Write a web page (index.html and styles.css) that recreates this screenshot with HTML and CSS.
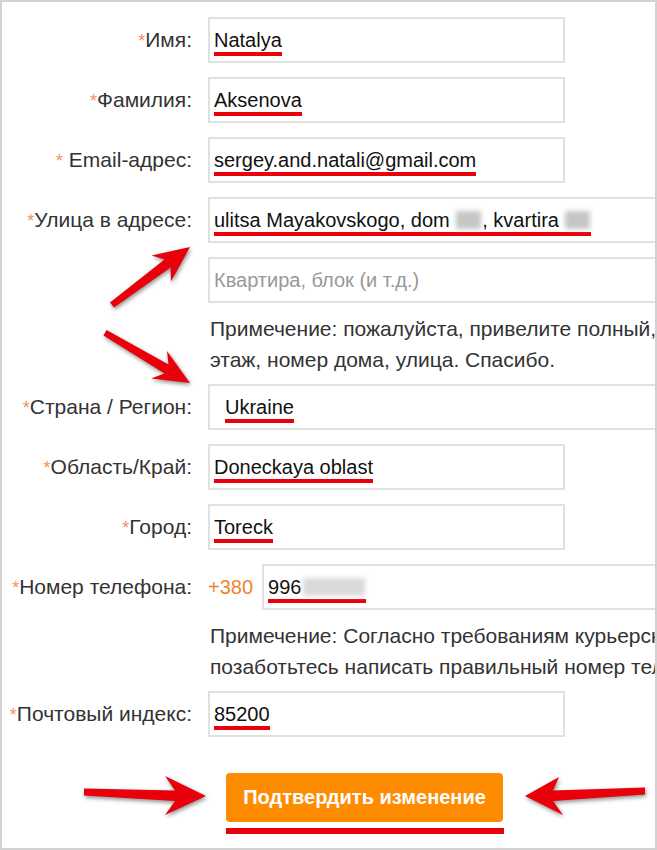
FILE: index.html
```html
<!DOCTYPE html>
<html lang="ru">
<head>
<meta charset="utf-8">
<title>Адрес доставки</title>
<link rel="stylesheet" href="styles.css">
</head>
<body>
<div class="frame">
  <div class="form">
    <div class="row">
      <span class="label"><span class="req">*</span>Имя:</span>
      <div class="field"><span class="val">Natalya</span></div>
    </div>
    <div class="row">
      <span class="label"><span class="req">*</span>Фамилия:</span>
      <div class="field"><span class="val">Aksenova</span></div>
    </div>
    <div class="row">
      <span class="label"><span class="req">*</span> Email-адрес:</span>
      <div class="field"><span class="val">sergey.and.natali@gmail.com</span></div>
    </div>
    <div class="row">
      <span class="label"><span class="req">*</span>Улица в адресе:</span>
      <div class="field wide"><span class="val">ulitsa Mayakovskogo, dom <span class="blur"></span>, kvartira <span class="blur"></span></span></div>
    </div>
    <div class="row tight">
      <span class="label"></span>
      <div class="field wide"><span class="placeholder">Квартира, блок (и т.д.)</span></div>
    </div>
    <div class="note">
      <div class="line">Примечение: пожалуйста, привелите полный,</div>
      <div class="line">этаж, номер дома, улица. Спасибо.</div>
    </div>
    <div class="row">
      <span class="label"><span class="req">*</span>Страна / Регион:</span>
      <div class="field wide select"><span class="val">Ukraine</span></div>
    </div>
    <div class="row">
      <span class="label"><span class="req">*</span>Область/Край:</span>
      <div class="field"><span class="val">Doneckaya oblast</span></div>
    </div>
    <div class="row">
      <span class="label"><span class="req">*</span>Город:</span>
      <div class="field"><span class="val">Toreck</span></div>
    </div>
    <div class="row tight">
      <span class="label"><span class="req">*</span>Номер телефона:</span>
      <div class="phone">
        <span class="prefix">+380</span>
        <div class="field wide phone-field"><span class="val">996<span class="blur long"></span></span></div>
      </div>
    </div>
    <div class="note">
      <div class="line">Примечение: Согласно требованиям курьерской службы,</div>
      <div class="line">позаботьтесь написать правильный номер телефона.</div>
    </div>
    <div class="row">
      <span class="label"><span class="req">*</span>Почтовый индекс:</span>
      <div class="field"><span class="val">85200</span></div>
    </div>
    <div class="submit">
      <button class="btn" type="button">Подтвердить изменение</button>
      <div class="btn-mark"></div>
    </div>
  </div>
  <svg class="arrows" width="657" height="850" viewBox="0 0 657 850" aria-hidden="true">
    <polygon points="110,302.5 164.5,259.5 151.5,255.5 190,247 171,281.5 170.5,267.5 114,307.5"/>
    <polygon points="106.5,330 168.5,364.5 167,351 190,383 151,378.5 164.5,373.5 103.5,335.5"/>
    <polygon points="84,788.5 175,790.5 165,776 206,796 165,815 175,801 84,795.5"/>
    <polygon points="645,787.5 553,790.5 559,777 525,796 563,815 553,801 645,794.5"/>
  </svg>
</div>
</body>
</html>
```
FILE: styles.css
```css
* { box-sizing: border-box; }
html, body { margin: 0; padding: 0; background: #fff; }
body {
  font-family: "Liberation Sans", Arial, sans-serif;
  font-size: 20px;
  color: #333;
}
.frame {
  position: relative;
  width: 657px;
  height: 850px;
  border: 2px solid #d2d2d2;
  overflow: hidden;
  padding-top: 15px;
}
.form {
  display: flex;
  flex-direction: column;
}
.row {
  display: flex;
  align-items: baseline;
  gap: 16px;
  margin-bottom: 14px;
}
.row.tight { margin-bottom: 10px; }
.label {
  flex: 0 0 190px;
  width: 190px;
  text-align: right;
  white-space: nowrap;
  color: #333;
  font-size: 21px;
}
.req {
  color: #f0935a;
  font-size: 18px;
}
.field {
  flex: 0 0 357px;
  width: 357px;
  height: 46px;
  border: 2px solid #e1e1e1;
  background: #fff;
  padding: 10px 0 0 4px;
  white-space: nowrap;
  color: #111;
  font-size: 20px;
}
.field.wide { flex: 0 0 470px; width: 470px; }
.field.select { padding-left: 15px; }
.val {
  display: inline-block;
  border-bottom: 4px solid #e8000a;
}
.placeholder { color: #999; }
.blur {
  display: inline-block;
  width: 25px;
  height: 18px;
  margin: 0 1px;
  background: #c6c6c6;
  filter: blur(2.5px);
  vertical-align: -2px;
}
.blur.long {
  width: 62px;
  background: #dadada;
  margin-left: 2px;
}
.phone {
  display: flex;
  align-items: baseline;
  gap: 9px;
}
.prefix { color: #f0832c; font-size: 20px; }
.phone-field { padding-left: 4px; }
.note {
  margin: 0 0 9px 208px;
  line-height: 31px;
  font-size: 21px;
  white-space: nowrap;
  color: #333;
}
.submit {
  margin: 22px 0 0 224px;
  width: 278px;
}
.btn {
  display: block;
  width: 277px;
  height: 49px;
  border: 0;
  border-radius: 4px;
  background: #ff8c00;
  color: #fff;
  font-family: "Liberation Sans", Arial, sans-serif;
  font-weight: bold;
  font-size: 20px;
  padding: 0;
}
.btn-mark {
  margin-top: 6px;
  width: 278px;
  height: 6px;
  background: #e8000a;
}
.arrows {
  position: absolute;
  left: -2px;
  top: -2px;
  fill: #e8000a;
  filter: drop-shadow(1px 2px 2px rgba(0,0,0,0.45));
  pointer-events: none;
}
```
